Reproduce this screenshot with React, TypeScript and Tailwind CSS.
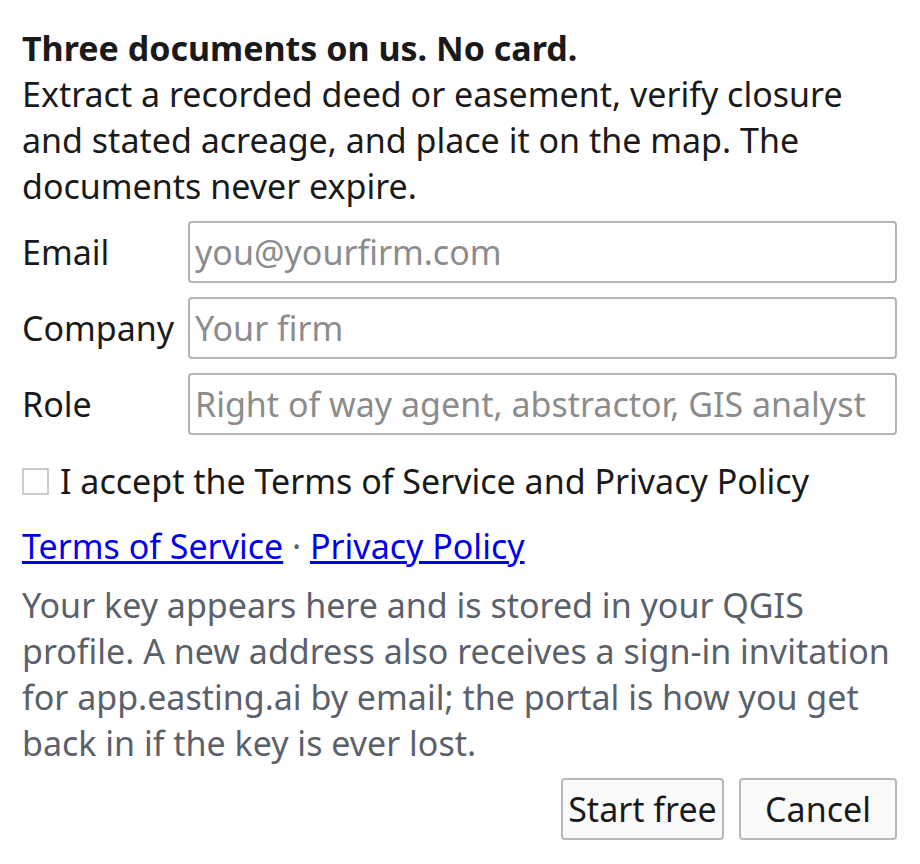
import React, { useState } from "react";

const fields = [
  { label: "Email", placeholder: "you@yourfirm.com" },
  { label: "Company", placeholder: "Your firm" },
  { label: "Role", placeholder: "Right of way agent, abstractor, GIS analyst" },
];

const App = () => {
  const [accepted, setAccepted] = useState(false);

  return (
    <div className="w-[920px] h-[864px] bg-white pl-[22px] pr-[23px] pt-[25px] font-['Noto_Sans',sans-serif] text-[34px] leading-[46px] text-[#1a1a1a]">
      <div className="font-bold">Three documents on us. No card.</div>
      <p>
        Extract a recorded deed or easement, verify closure and stated acreage, and place it on the map. The
        documents never expire.
      </p>

      <div className="mt-[12px] flex flex-col gap-[14px]">
        {fields.map((f) => (
          <div key={f.label} className="flex items-center">
            <label className="w-[166px] shrink-0">{f.label}</label>
            <input
              type="text"
              placeholder={f.placeholder}
              className="h-[62px] min-w-0 flex-1 rounded-[4px] border-2 border-[#b4b4b4] bg-white px-[5px] text-[34px] placeholder:text-[#8c8c8c] outline-none"
            />
          </div>
        ))}
      </div>

      <label className="mt-[23px] flex items-center gap-[11px]">
        <span
          onClick={() => setAccepted(!accepted)}
          className="h-[27px] w-[27px] shrink-0 border-2 border-[#cccccc] bg-white"
        />
        <span>I accept the Terms of Service and Privacy Policy</span>
      </label>

      <div className="mt-[19px]">
        <a href="#" className="text-[#0000ee] underline">Terms of Service</a>
        <span className="text-[#5b616b]"> · </span>
        <a href="#" className="text-[#0000ee] underline">Privacy Policy</a>
      </div>

      <p className="mt-[13px] text-[#5b616b]">
        Your key appears here and is stored in your QGIS profile. A new address also receives a sign-in invitation
        for app.easting.ai by email; the portal is how you get back in if the key is ever lost.
      </p>

      <div className="mt-[12px] flex justify-end gap-[15px]">
        <button className="h-[62px] w-[163px] rounded-[4px] border-2 border-[#b8b8b8] bg-[#fafafa]">Start free</button>
        <button className="h-[62px] w-[158px] rounded-[4px] border-2 border-[#b8b8b8] bg-[#fafafa]">Cancel</button>
      </div>
    </div>
  );
};

export default App;
